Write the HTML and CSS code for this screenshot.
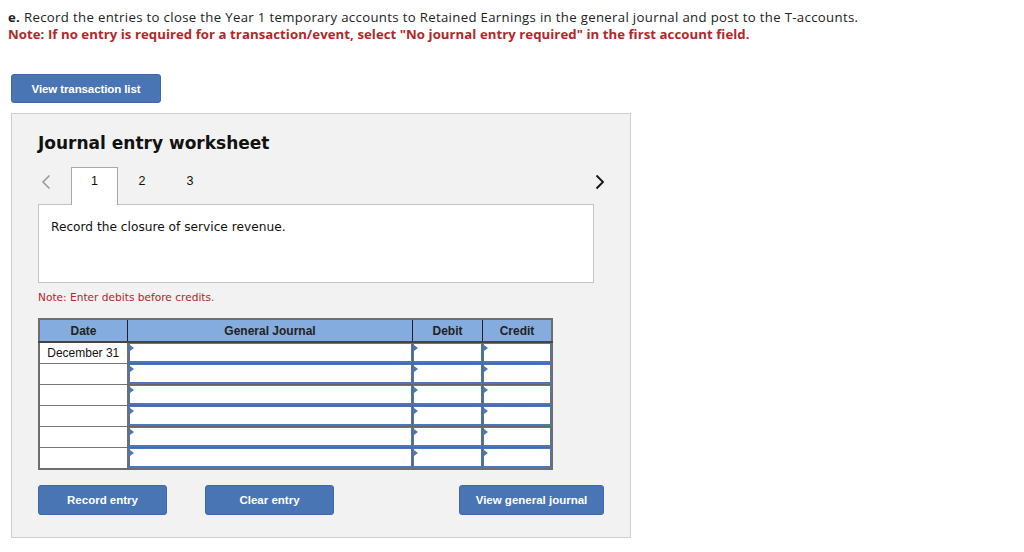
FILE: index.html
```html
<!DOCTYPE html>
<html>
<head>
<meta charset="utf-8">
<link rel="stylesheet" href="styles.css">
</head>
<body>
<div class="page">
  <div class="intro">
    <p class="line line-main"><b>e.</b> Record the entries to close the Year 1 temporary accounts to Retained Earnings in the general journal and post to the T-accounts.</p>
    <p class="line note-top">Note: If no entry is required for a transaction/event, select "No journal entry required" in the first account field.</p>
  </div>
  <button class="btn btn-list">View transaction list</button>
  <div class="panel">
    <h1 class="title">Journal entry worksheet</h1>
    <div class="tabs">
      <span class="arrow arrow-left"><svg width="10" height="16" viewBox="0 0 10 16"><path d="M8.5 1.5 L2 8 L8.5 14.5" fill="none" stroke="#9a9a9a" stroke-width="1.6"/></svg></span>
      <span class="tab active">1</span>
      <span class="tab">2</span>
      <span class="tab">3</span>
      <span class="spacer"></span>
      <span class="arrow arrow-right"><svg width="10" height="16" viewBox="0 0 10 16"><path d="M1.5 1.5 L8 8 L1.5 14.5" fill="none" stroke="#111" stroke-width="1.8"/></svg></span>
    </div>
    <div class="desc">Record the closure of service revenue.</div>
    <p class="note">Note: Enter debits before credits.</p>
    <table class="journal">
      <thead>
        <tr><th class="c-date">Date</th><th class="c-gj">General Journal</th><th class="c-amt">Debit</th><th class="c-amt c-last">Credit</th></tr>
      </thead>
      <tbody>
        <tr><td class="date">December 31</td><td class="in"><div class="field"></div></td><td class="in"><div class="field"></div></td><td class="in"><div class="field"></div></td></tr>
        <tr><td class="date"></td><td class="in"><div class="field"></div></td><td class="in"><div class="field"></div></td><td class="in"><div class="field"></div></td></tr>
        <tr><td class="date"></td><td class="in"><div class="field"></div></td><td class="in"><div class="field"></div></td><td class="in"><div class="field"></div></td></tr>
        <tr><td class="date"></td><td class="in"><div class="field"></div></td><td class="in"><div class="field"></div></td><td class="in"><div class="field"></div></td></tr>
        <tr><td class="date"></td><td class="in"><div class="field"></div></td><td class="in"><div class="field"></div></td><td class="in"><div class="field"></div></td></tr>
        <tr><td class="date"></td><td class="in"><div class="field"></div></td><td class="in"><div class="field"></div></td><td class="in"><div class="field"></div></td></tr>
      </tbody>
    </table>
    <div class="actions">
      <button class="btn btn-record">Record entry</button>
      <button class="btn btn-clear">Clear entry</button>
      <span class="spacer"></span>
      <button class="btn btn-view">View general journal</button>
    </div>
  </div>
</div>
</body>
</html>
```
FILE: styles.css
```css
html, body {
  margin: 0;
  padding: 0;
  background: #fff;
}
.page {
  padding: 9px 0 0 0;
  font-family: "Open Sans", "Liberation Sans", sans-serif;
}
.intro {
  padding-left: 8px;
}
.line {
  margin: 0;
  font-size: 13.2px;
  line-height: 17px;
  color: #222;
  white-space: nowrap;
}
.line-main {
  letter-spacing: 0.33px;
}
.line b {
  font-weight: 700;
}
.note-top {
  color: #b0282a;
  font-weight: 700;
  letter-spacing: 0.05px;
}
.btn {
  font-family: "Liberation Sans", Arial, sans-serif;
  font-weight: 700;
  font-size: 11.5px;
  color: #fff;
  background: #4a75b4;
  border: 1px solid #3f68a6;
  border-radius: 3px;
  padding: 0;
  height: 30px;
  cursor: pointer;
}
.btn-list {
  display: block;
  margin: 31px 0 0 11px;
  width: 150px;
  height: 29px;
  letter-spacing: -0.1px;
}
.panel {
  margin: 10px 0 0 11px;
  height: 423px;
  background: #f2f2f2;
  border: 1px solid #cfcfcf;
  padding: 0 0 0 26px;
  box-sizing: content-box;
  width: 592px;
  display: flex;
  flex-direction: column;
  align-items: flex-start;
}
.title {
  margin: 18px 0 0 0;
  font-family: "DejaVu Sans", Verdana, sans-serif;
  font-weight: 700;
  font-size: 17px;
  line-height: 22px;
  color: #111;
}
.tabs {
  display: flex;
  align-items: flex-end;
  width: 570px;
  height: 37px;
  margin-top: 13px;
}
.arrow {
  align-self: flex-start;
  margin-top: 7px;
  display: flex;
  width: 33px;
  padding-left: 3px;
  box-sizing: border-box;
}
.arrow-right {
  width: auto;
  padding: 0 3px 0 0;
}
.spacer {
  flex: 1;
}
.tab {
  width: 48px;
  height: 37px;
  box-sizing: border-box;
  display: flex;
  align-items: flex-start;
  justify-content: center;
  font-family: "Liberation Sans", Arial, sans-serif;
  font-size: 12.5px;
  line-height: 14px;
  color: #111;
  padding-top: 7px;
}
.tab.active {
  background: #fff;
  border: 1px solid #a8a8a8;
  border-bottom: none;
  width: 47px;
  height: 38px;
  margin-bottom: -1px;
  padding-top: 6px;
  position: relative;
  z-index: 1;
}
.desc {
  width: 556px;
  height: 79px;
  box-sizing: border-box;
  background: #fff;
  border: 1px solid #c4c4c4;
  padding: 14px 0 0 12px;
  font-family: "DejaVu Sans", Verdana, sans-serif;
  font-size: 12.2px;
  line-height: 16px;
  color: #111;
}
.note {
  margin: 7px 0 0 0;
  font-family: "DejaVu Sans", Verdana, sans-serif;
  font-size: 10.6px;
  line-height: 14px;
  color: #b0282a;
}
.journal {
  margin-top: 14px;
  border-collapse: collapse;
  border: 2px solid #6e6e6e;
  font-family: "Liberation Sans", Arial, sans-serif;
  font-size: 12px;
  table-layout: fixed;
}
.journal th {
  background: #84acdf;
  height: 21px;
  padding: 0;
  font-weight: 700;
  color: #222;
  border: 1px solid #6e6e6e;
  border-right: 1px solid #222;
  border-bottom: 2px solid #444;
}
.journal th:last-child {
  border-right: 2px solid #6e6e6e;
}
.c-date { width: 87px; }
.c-gj { width: 284px; }
.c-amt { width: 69px; }
.c-last { width: 68px; }
.journal td {
  padding: 0;
  height: 20px;
  border: 1px solid #777;
  background: #fff;
}
.journal td.date {
  text-align: center;
  color: #111;
  border-right: 2px solid #6e6e6e;
}
.journal td.in {
  border: 1px solid #666;
  vertical-align: top;
}
.field {
  position: relative;
  height: 20px;
  box-sizing: border-box;
  border: 1px solid #4b78bd;
  border-bottom: 2px solid #4b78bd;
  background: #fff;
}
.field::before {
  content: "";
  position: absolute;
  left: 0;
  top: 1px;
  border-top: 3px solid transparent;
  border-bottom: 3px solid transparent;
  border-left: 4px solid #4b78bd;
}
.actions {
  display: flex;
  width: 566px;
  margin-top: 15px;
}
.btn-record {
  width: 129px;
}
.btn-clear {
  width: 129px;
  margin-left: 38px;
}
.btn-view {
  width: 145px;
}
```
